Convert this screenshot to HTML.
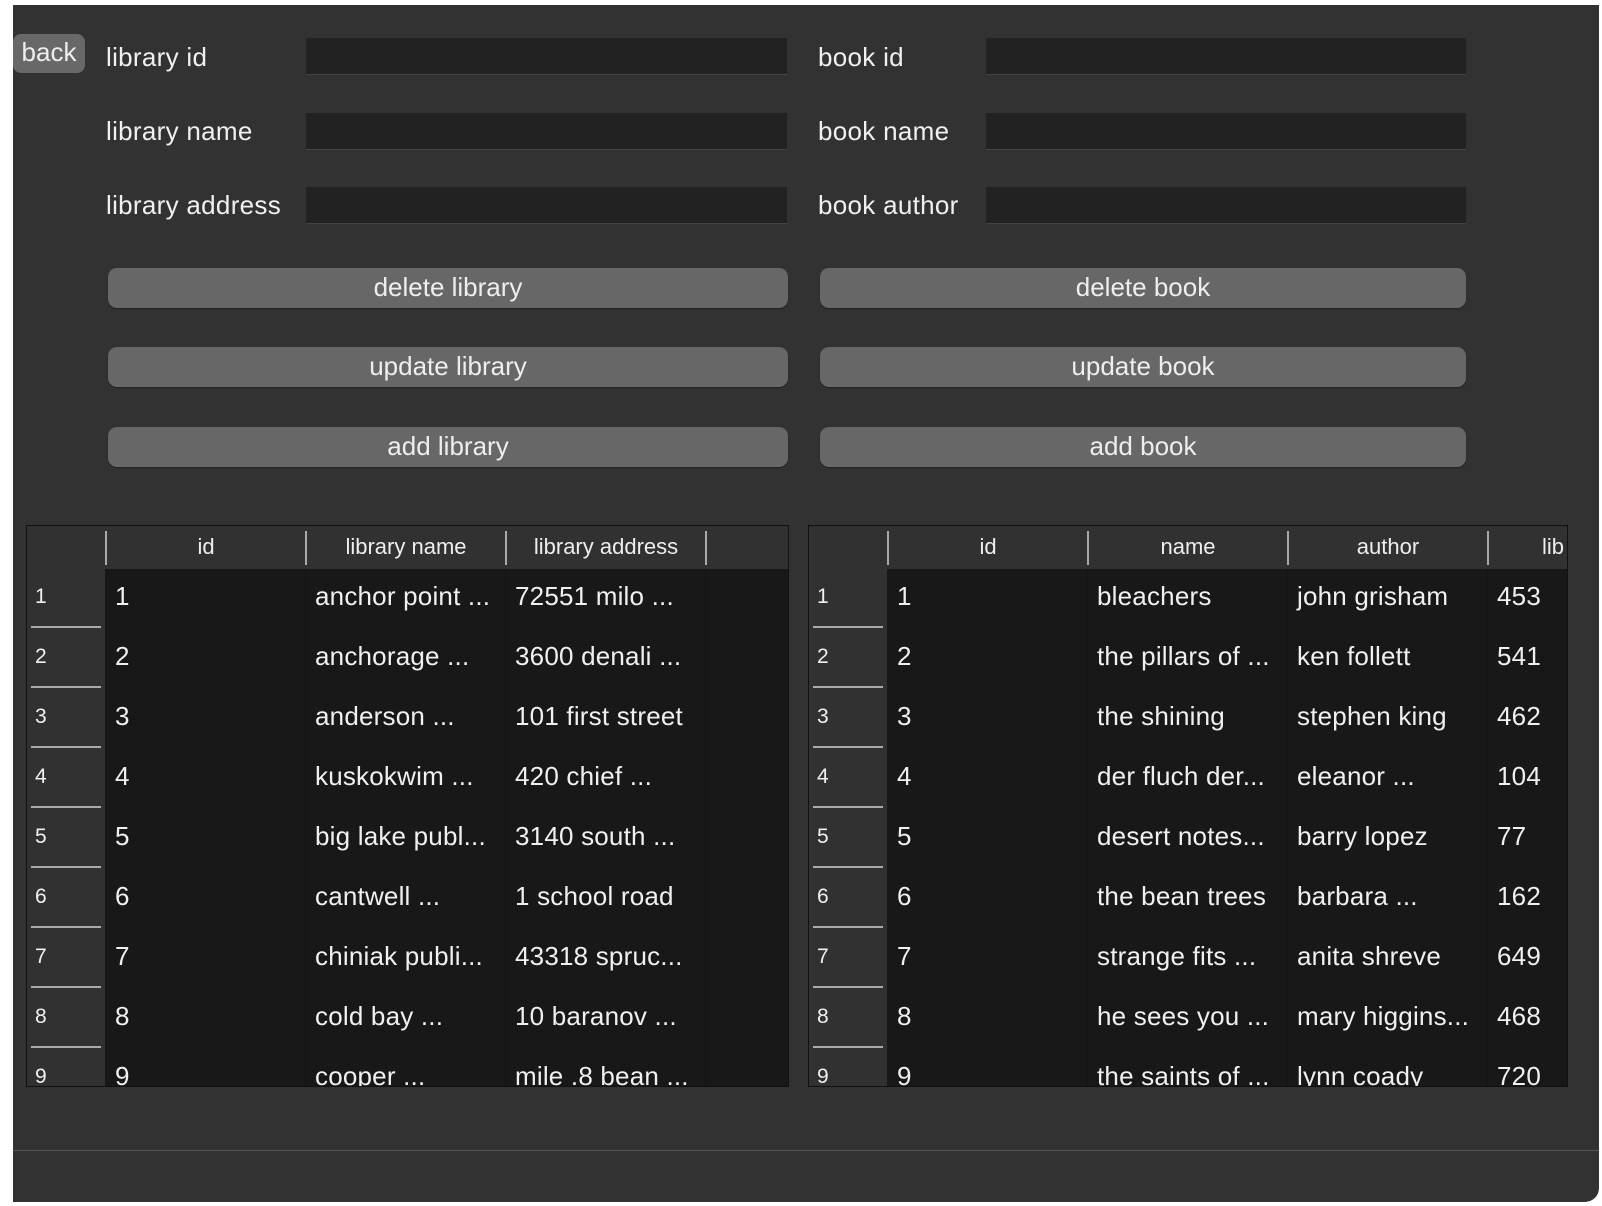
<!DOCTYPE html><html><head><style>
body{margin:0;width:1602px;height:1206px;background:#fff;position:relative;overflow:hidden;font-family:"Liberation Sans",sans-serif;color:#f0f0f0}
.win{position:absolute;left:13px;top:5px;width:1586px;height:1197px;background:#323232;border-bottom-right-radius:14px}
.a{position:absolute}
.lbl{font-size:26px;line-height:30px;letter-spacing:0.3px}
.in{position:absolute;background:#222;border-bottom:1px solid #444;height:36px}
.btn{position:absolute;background:#676767;border-radius:9px;height:40px;line-height:38px;text-align:center;font-size:26px;color:#eee;box-shadow:0 1px 1px #222}
.tbl{position:absolute;top:525px;height:560px;background:#181818;border:1px solid #111;overflow:hidden}
.hd{position:absolute;left:0;top:0;right:0;height:43px;background:#313131}
.rh{position:absolute;left:0;top:43px;width:78px;bottom:0;background:#313131}
.hc{position:absolute;top:0;height:43px;line-height:41px;text-align:center;font-size:22px;color:#eee}
.vd{position:absolute;top:5px;width:2px;height:34px;background:#aaa}
.cell{position:absolute;font-size:26px;line-height:30px;white-space:nowrap;letter-spacing:0.2px}
.rn{position:absolute;font-size:21px;left:8px}
.sep{position:absolute;left:4px;width:70px;height:2px;background:#aaa}
.cd{position:absolute;top:43px;bottom:0;width:1px;background:#141414}
</style></head><body>
<div class="win"></div>
<div class="a" style="left:13px;top:34px;width:72px;height:39px;background:#686868;border-radius:8px;font-size:26px;line-height:36px;text-align:center;color:#eee">back</div>
<div class="a lbl" style="left:106px;top:42px">library id</div>
<div class="a lbl" style="left:106px;top:116px">library name</div>
<div class="a lbl" style="left:106px;top:190px">library address</div>
<div class="a lbl" style="left:818px;top:42px">book id</div>
<div class="a lbl" style="left:818px;top:116px">book name</div>
<div class="a lbl" style="left:818px;top:190px">book author</div>
<div class="in" style="left:306px;top:38px;width:481px"></div>
<div class="in" style="left:306px;top:113px;width:481px"></div>
<div class="in" style="left:306px;top:187px;width:481px"></div>
<div class="in" style="left:986px;top:38px;width:480px"></div>
<div class="in" style="left:986px;top:113px;width:480px"></div>
<div class="in" style="left:986px;top:187px;width:480px"></div>
<div class="btn" style="left:108px;top:268px;width:680px">delete library</div>
<div class="btn" style="left:108px;top:347px;width:680px">update library</div>
<div class="btn" style="left:108px;top:427px;width:680px">add library</div>
<div class="btn" style="left:820px;top:268px;width:646px">delete book</div>
<div class="btn" style="left:820px;top:347px;width:646px">update book</div>
<div class="btn" style="left:820px;top:427px;width:646px">add book</div>
<div class="a" style="left:13px;top:1150px;width:1586px;height:1px;background:#555"></div>

<div class="tbl" style="left:26px;width:761px">
<div class="hd"></div><div class="rh"></div>
<div class="vd" style="left:78px"></div><div class="vd" style="left:278px"></div><div class="vd" style="left:478px"></div><div class="vd" style="left:678px"></div>
<div class="hc" style="left:80px;width:198px">id</div><div class="hc" style="left:280px;width:198px">library name</div><div class="hc" style="left:480px;width:198px">library address</div>
<div class="cd" style="left:278px"></div><div class="cd" style="left:478px"></div><div class="cd" style="left:678px"></div>
<div id="L"></div>
</div>
<div class="tbl" style="left:808px;width:758px">
<div class="hd"></div><div class="rh"></div>
<div class="vd" style="left:78px"></div><div class="vd" style="left:278px"></div><div class="vd" style="left:478px"></div><div class="vd" style="left:678px"></div>
<div class="hc" style="left:80px;width:198px">id</div><div class="hc" style="left:280px;width:198px">name</div><div class="hc" style="left:480px;width:198px">author</div><div class="hc" style="left:733px;text-align:left">lib</div>
<div class="cd" style="left:278px"></div><div class="cd" style="left:478px"></div><div class="cd" style="left:678px"></div>
<div id="R"></div>
</div>
<script>
var L=[["anchor point ...","72551 milo ..."],["anchorage ...","3600 denali ..."],["anderson ...","101 first street"],["kuskokwim ...","420 chief ..."],["big lake publ...","3140 south ..."],["cantwell ...","1 school road"],["chiniak publi...","43318 spruc..."],["cold bay ...","10 baranov ..."],["cooper ...","mile .8 bean ..."]];
var R=[["bleachers","john grisham","453"],["the pillars of ...","ken follett","541"],["the shining","stephen king","462"],["der fluch der...","eleanor ...","104"],["desert notes...","barry lopez","77"],["the bean trees","barbara ...","162"],["strange fits ...","anita shreve","649"],["he sees you ...","mary higgins...","468"],["the saints of ...","lynn coady","720"]];
function f(id,d){var h="";for(var i=0;i<9;i++){var y=43+i*60;h+='<div class="rn" style="top:'+(y+16)+'px">'+(i+1)+'</div>';if(i<8)h+='<div class="sep" style="top:'+(y+57)+'px"></div>';h+='<div class="cell" style="left:88px;top:'+(y+12)+'px">'+(i+1)+'</div>';for(var j=0;j<d[i].length;j++)h+='<div class="cell" style="left:'+(288+200*j)+'px;top:'+(y+12)+'px">'+d[i][j]+'</div>';}document.getElementById(id).innerHTML=h;}
f("L",L);f("R",R);
</script>
</body></html>
